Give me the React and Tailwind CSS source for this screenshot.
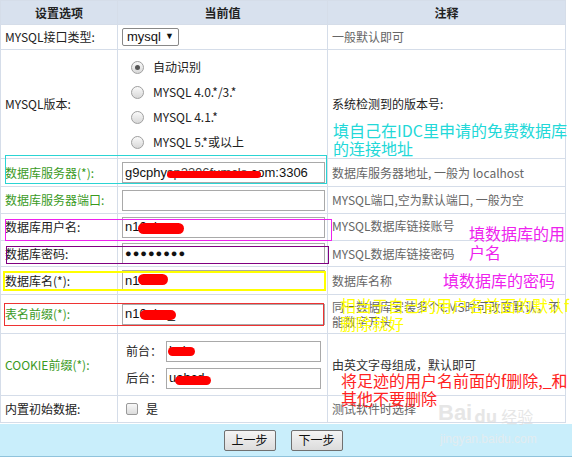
import React from "react";

const cjk = { fontFamily: '"Noto Sans CJK SC", "Liberation Sans", sans-serif' };

function Box({ children, w = "w-[203px]" }) {
  return (
    <div
      className={`${w} h-[21px] border border-[#a9a9a9] bg-white flex items-center px-[2px] text-[13px] text-[#111] overflow-hidden whitespace-nowrap`}
      style={{ fontFamily: '"Liberation Sans", "Noto Sans CJK SC", sans-serif' }}
    >
      {children}
    </div>
  );
}

function Radio({ checked, label }) {
  return (
    <div className="flex items-center gap-[9px] h-[25px]">
      <span className="w-[13px] h-[13px] rounded-full border border-[#a0a0a0] bg-gradient-to-b from-[#fafafa] to-[#d8d8d8] flex items-center justify-center">
        {checked && <span className="w-[5px] h-[5px] rounded-full bg-[#555]" />}
      </span>
      <span className="text-[12px] text-[#222]">{label}</span>
    </div>
  );
}

const green = "text-[#3a9a1e]";
const dark = "text-[#222]";

const rows = [
  { label: "数据库服务器(*):", color: green, h: "h-[28px]", val: <Box>g9cphys<span className="text-[#444]">p2306fumcls</span>.com:3306</Box>, note: "数据库服务器地址, 一般为 localhost" },
  { label: "数据库服务器端口:", color: green, h: "h-[27px]", val: <Box>{""}</Box>, note: "MYSQL端口,空为默认端口, 一般为空" },
  { label: "数据库用户名:", color: dark, h: "h-[27px]", val: <Box>n1{"0abc"}</Box>, note: "MYSQL数据库链接账号", top: true },
  { label: "数据库密码:", color: dark, h: "h-[26px]", val: <Box><span className="tracking-[1px] text-[11px]">●●●●●●●●</span></Box>, note: "MYSQL数据库链接密码" },
  { label: "数据库名(*):", color: dark, h: "h-[28px]", val: <Box>n1{"0ab"}</Box>, note: "数据库名称" },
];

const blobs = [
  "left-[167px] top-[171px] w-[94px] h-[7px]",
  "left-[138px] top-[223px] w-[46px] h-[11px]",
  "left-[138px] top-[274px] w-[30px] h-[11px]",
  "left-[140px] top-[310px] w-[36px] h-[10px]",
  "left-[168px] top-[347px] w-[27px] h-[9px]",
  "left-[175px] top-[376px] w-[36px] h-[9px]",
];

export default function App() {
  return (
    <div className="relative w-[572px] h-[458px] bg-white overflow-hidden text-[12px]" style={cjk}>
      <table className="w-[566px] table-fixed border-collapse">
        <colgroup>
          <col className="w-[117px]" />
          <col className="w-[210px]" />
          <col />
        </colgroup>
        <thead>
          <tr className="h-[24px] bg-[#d8e1ee] text-[#222] font-bold text-[12px]">
            <th className="border border-[#d5dde9]">设置选项</th>
            <th className="border border-[#d5dde9]">当前值</th>
            <th className="border border-[#d5dde9]">注释</th>
          </tr>
        </thead>
        <tbody className="text-[12px]">
          <tr className="h-[25px]">
            <td className={`border border-[#d5dde9] pl-[4px] ${dark}`}>MYSQL接口类型:</td>
            <td className="border border-[#d5dde9] pl-[4px]">
              <div className="w-[57px] h-[18px] border border-[#888] rounded-[2px] bg-white flex items-center justify-between px-[4px] text-[13px] text-[#111]" style={{ fontFamily: '"Liberation Sans", sans-serif' }}>
                <span>mysql</span>
                <span className="text-[9px]">▼</span>
              </div>
            </td>
            <td className="border border-[#d5dde9] pl-[4px] text-[#666]">一般默认即可</td>
          </tr>
          <tr className="h-[109px]">
            <td className={`border border-[#d5dde9] pl-[4px] ${dark}`}>MYSQL版本:</td>
            <td className="border border-[#d5dde9] pl-[13px] pt-[1px]">
              <Radio checked label="自动识别" />
              <Radio label="MYSQL 4.0.*/3.*" />
              <Radio label="MYSQL 4.1.*" />
              <Radio label="MYSQL 5.*或以上" />
            </td>
            <td className="border border-[#d5dde9] pl-[4px] text-[#222]">系统检测到的版本号:</td>
          </tr>
          {rows.map((r) => (
            <tr key={r.label} className={r.h}>
              <td className={`border border-[#d5dde9] pl-[4px] ${r.color}`}>{r.label}</td>
              <td className="border border-[#d5dde9] pl-[4px]">{r.val}</td>
              <td className={`border border-[#d5dde9] pl-[4px] text-[#666] ${r.top ? "align-top pt-[3px]" : ""}`}>{r.note}</td>
            </tr>
          ))}
          <tr className="h-[39px]">
            <td className={`border border-[#d5dde9] pl-[4px] ${green}`}>表名前缀(*):</td>
            <td className="border border-[#d5dde9] pl-[4px]">
              <Box>n1{"0abc_"}</Box>
            </td>
            <td className="border border-[#d5dde9] pl-[4px] text-[#666] leading-[15px]">同一数据库安装多个CMS时可改变默认，不能数字开头</td>
          </tr>
          <tr className="h-[62px]">
            <td className={`border border-[#d5dde9] pl-[4px] ${green}`}>COOKIE前缀(*):</td>
            <td className="border border-[#d5dde9] pl-[8px]">
              <div className="flex items-center h-[27px] text-[#222]">
                <span className="w-[40px]">前台：</span>
                <Box w="w-[155px]">kab</Box>
              </div>
              <div className="flex items-center h-[27px] text-[#222]">
                <span className="w-[40px]">后台：</span>
                <Box w="w-[155px]">uabcd</Box>
              </div>
            </td>
            <td className="border border-[#d5dde9] pl-[4px] text-[#333]">由英文字母组成，默认即可</td>
          </tr>
          <tr className="h-[27px]">
            <td className={`border border-[#d5dde9] pl-[4px] ${dark}`}>内置初始数据:</td>
            <td className="border border-[#d5dde9] pl-[8px]">
              <div className="flex items-center gap-[8px] text-[#222]">
                <span className="w-[12px] h-[12px] rounded-[2px] border border-[#9a9a9a] bg-gradient-to-b from-[#f8f8f8] to-[#dcdcdc]" />
                <span>是</span>
              </div>
            </td>
            <td className="border border-[#d5dde9] pl-[4px] text-[#666]">测试软件时选择</td>
          </tr>
        </tbody>
      </table>

      <div className="h-[33px] mt-[1px] bg-[#c9eefb] border-b border-[#8fc3dc] flex items-center justify-center gap-[15px] pr-[6px]">
        <button className="w-[52px] h-[21px] border border-[#707070] rounded-[2px] bg-gradient-to-b from-[#f4f4f4] to-[#dcdcdc] text-[12px] text-[#111]">上一步</button>
        <button className="w-[52px] h-[21px] border border-[#707070] rounded-[2px] bg-gradient-to-b from-[#f4f4f4] to-[#dcdcdc] text-[12px] text-[#111]">下一步</button>
      </div>

      {/* redactions */}
      {blobs.map((b) => (
        <span key={b} className={`absolute ${b} rounded-full bg-[#ff0000]`} />
      ))}

      {/* annotation boxes */}
      <div className="absolute left-[5px] top-[155px] w-[322px] h-[29px] border border-[#2ad4d4]" />
      <div className="absolute left-[5px] top-[219px] w-[327px] h-[22px] border border-[#ee22ee]" />
      <div className="absolute left-[6px] top-[246px] w-[323px] h-[18px] border border-[#800080]" />
      <div className="absolute left-[3px] top-[271px] w-[323px] h-[20px] border-2 border-[#ffff00]" />
      <div className="absolute left-[4px] top-[303px] w-[320px] h-[23px] border border-[#ee3333]" />

      {/* annotation texts */}
      <div className="absolute left-[333px] top-[121px] w-[236px] text-[16px] leading-[18px] text-[#22d8d8]">填自己在IDC里申请的免费数据库的连接地址</div>
      <div className="absolute left-[469px] top-[224px] w-[100px] text-[16px] leading-[19px] text-[#ee22ee]">填数据库的用户名</div>
      <div className="absolute left-[443px] top-[271px] text-[16px] leading-[19px] text-[#ee22ee] whitespace-nowrap">填数据库的密码</div>
      <div className="absolute left-[340px] top-[296px] w-[232px] text-[16px] leading-[18px] text-[#ffff00]">相当于自己的用户名前面的默认f删除就好</div>
      <div className="absolute left-[341px] top-[371px] w-[232px] text-[16px] leading-[18px] text-[#ff2222]">将足迹的用户名前面的f删除,_和其他不要删除</div>

      {/* watermark */}
      <div className="absolute left-[438px] top-[402px] flex items-end text-[#dcdcdc] opacity-70 pointer-events-none">
        <span className="text-[22px] font-bold leading-none" style={{ fontFamily: '"Liberation Sans", sans-serif' }}>Bai</span>
        <span className="text-[18px] font-bold leading-none px-[2px]">du</span>
        <span className="text-[16px] leading-none ml-[2px]">经验</span>
      </div>
      <div className="absolute left-[440px] top-[430px] text-[12px] text-[#e2ecf0] pointer-events-none" style={{ fontFamily: '"Liberation Sans", sans-serif' }}>jingyan.baidu.com</div>
    </div>
  );
}
